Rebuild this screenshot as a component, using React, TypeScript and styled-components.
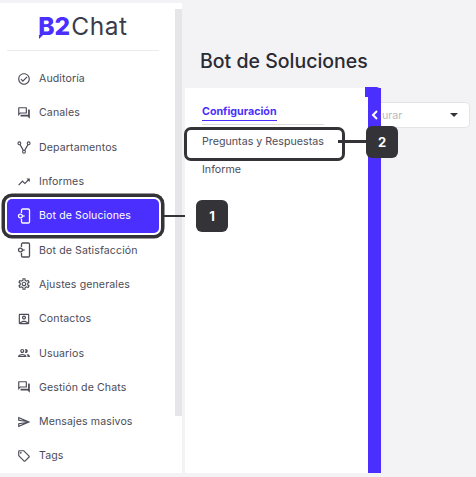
import styled, { createGlobalStyle } from 'styled-components';
import {
  MdOutlineCheckCircle,
  MdOutlineForum,
  MdTrendingUp,
  MdOutlineSettings,
  MdOutlineAccountBox,
  MdOutlinePeople,
  MdOutlineSend,
  MdOutlineLocalOffer,
} from 'react-icons/md';

const purple = '#4b2fff';
const dark = '#333338';
const textColor = '#4c4c58';

const GlobalStyle = createGlobalStyle`
  html, body {
    margin: 0;
    padding: 0;
    background: #f3f3f6;
  }
  * {
    box-sizing: border-box;
  }
`;

const Page = styled.div`
  width: 476px;
  height: 477px;
  padding: 3px 0 4px;
  display: flex;
  overflow: hidden;
  font-family: Inter, 'Liberation Sans', sans-serif;
  color: ${textColor};
`;

const Sidebar = styled.aside`
  width: 182px;
  height: 100%;
  background: #fff;
  display: flex;
  flex-shrink: 0;
`;

const SideColumn = styled.div`
  width: 175px;
  padding: 0 16px 0 7px;
`;

const LogoBox = styled.div`
  height: 48px;
  border-bottom: 1px solid #ececef;
  display: flex;
  justify-content: center;
  padding-top: 7px;
`;

const Logo = styled.div`
  font-size: 24.5px;
  line-height: 32px;
  letter-spacing: 0.6px;
  color: #3b3c4b;
`;

const LogoMark = styled.span`
  position: relative;
  margin-right: 1px;
  font-weight: 800;
  letter-spacing: 0;
  color: ${purple};
  &::after {
    content: '';
    position: absolute;
    left: 1px;
    bottom: 2px;
    border-top: 4px solid ${purple};
    border-right: 4px solid transparent;
  }
`;

const NavList = styled.nav`
  margin-top: 10.5px;
  width: 152px;
`;

const NavRow = styled.div<{ $active?: boolean }>`
  position: relative;
  height: 34.3px;
  padding-left: 10px;
  display: flex;
  align-items: center;
  gap: 8px;
  font-size: 10.6px;
  letter-spacing: 0.1px;
  border-radius: 5px;
  color: ${(p) => (p.$active ? '#fff' : textColor)};
  background: ${(p) => (p.$active ? purple : 'transparent')};
  box-shadow: ${(p) => (p.$active ? `0 0 0 2px #fff, 0 0 0 5.5px ${dark}` : 'none')};
`;

const IconSlot = styled.span`
  width: 14px;
  height: 14px;
  display: flex;
  align-items: center;
  justify-content: center;
  flex-shrink: 0;
  font-size: 16px;
`;

const ScrollTrack = styled.div`
  width: 7px;
  padding-top: 6px;
`;

const ScrollThumb = styled.div`
  height: 407px;
  background: #e6e6e9;
`;

const Main = styled.main`
  flex: 1;
  margin-left: 3px;
  display: flex;
  flex-direction: column;
`;

const Title = styled.h1`
  margin: 0;
  height: 85px;
  padding: 46px 0 0 15px;
  font-size: 19.5px;
  line-height: 24px;
  font-weight: 500;
  color: #2b2b33;
`;

const Content = styled.div`
  flex: 1;
  display: flex;
  align-items: flex-start;
`;

const Panel = styled.section`
  position: relative;
  width: 183px;
  height: 100%;
  padding: 15px 0 0 17px;
  background: #fff;
  font-size: 10.7px;
`;

const ActiveTab = styled.div`
  width: 122px;
  height: 22px;
  border-bottom: 1px solid #dcdce0;
  line-height: 17px;
  font-weight: 700;
  color: ${purple};
  & > span {
    display: inline-block;
    border-bottom: 1px solid ${purple};
  }
`;

const Tab = styled.div<{ $marked?: boolean }>`
  position: relative;
  height: 28px;
  margin-top: ${(p) => (p.$marked ? '2px' : '0')};
  display: flex;
  align-items: center;
  &::before {
    content: ${(p) => (p.$marked ? "''" : 'none')};
    position: absolute;
    left: -18px;
    top: 0;
    width: 155px;
    height: 28px;
    border: 3.5px solid ${dark};
    border-radius: 7px;
  }
`;

const Connector = styled.span<{ $left: number; $width: number }>`
  position: absolute;
  top: 50%;
  left: ${(p) => p.$left}px;
  width: ${(p) => p.$width}px;
  height: 2.5px;
  margin-top: -1px;
  background: ${dark};
`;

const Badge = styled.span<{ $left: number; $lift?: number }>`
  position: absolute;
  z-index: 2;
  top: 50%;
  left: ${(p) => p.$left}px;
  width: 32px;
  height: 32px;
  margin-top: ${(p) => -16 + (p.$lift ?? 0)}px;
  border-radius: 6px;
  background: ${dark};
  color: #fff;
  font-size: 13px;
  font-weight: 700;
  display: flex;
  align-items: center;
  justify-content: center;
`;

const Bar = styled.div`
  position: relative;
  width: 13px;
  height: 100%;
  background: ${purple};
  &::before {
    content: '';
    position: absolute;
    top: -1px;
    right: 0;
    width: 16px;
    height: 10px;
    background: ${purple};
    border-top-right-radius: 5px;
  }
`;

const BarChevron = styled.svg`
  position: absolute;
  top: 22px;
  left: 3px;
`;

const Select = styled.div`
  width: 89px;
  height: 26px;
  margin-top: 14px;
  padding: 0 11px 0 1px;
  background: #fff;
  border: 1px solid #e4e4e8;
  border-left: none;
  border-radius: 0 5px 5px 0;
  display: flex;
  align-items: center;
  justify-content: space-between;
  font-size: 10.7px;
  color: #b9b9c0;
`;

const Caret = styled.span`
  border-top: 4px solid #33333a;
  border-left: 4px solid transparent;
  border-right: 4px solid transparent;
`;

const NodesIcon = () => (
  <svg width="15" height="15" viewBox="0 0 15 15" fill="none" stroke="currentColor" strokeWidth="1.2">
    <circle cx="2.5" cy="3" r="1.5" />
    <circle cx="12.5" cy="3" r="1.5" />
    <circle cx="7.5" cy="12" r="1.5" />
    <path d="M3.3 4.4 6.8 10.6M11.7 4.4 8.2 10.6" />
  </svg>
);

const BotIcon = () => (
  <svg width="14" height="16" viewBox="0 0 14 16" fill="none" stroke="currentColor" strokeWidth="1.3">
    <path d="M4.5 5V2.2C4.5 1.5 5 1 5.7 1h5.6c.7 0 1.2.5 1.2 1.2v11.6c0 .7-.5 1.2-1.2 1.2H5.7c-.7 0-1.2-.5-1.2-1.2V11" />
    <circle cx="3.4" cy="8" r="1.9" />
    <path d="M5.3 8h2.4" />
  </svg>
);

const items = [
  { label: 'Auditoría', icon: <MdOutlineCheckCircle /> },
  { label: 'Canales', icon: <MdOutlineForum /> },
  { label: 'Departamentos', icon: <NodesIcon /> },
  { label: 'Informes', icon: <MdTrendingUp /> },
  { label: 'Bot de Soluciones', icon: <BotIcon />, active: true },
  { label: 'Bot de Satisfacción', icon: <BotIcon /> },
  { label: 'Ajustes generales', icon: <MdOutlineSettings /> },
  { label: 'Contactos', icon: <MdOutlineAccountBox /> },
  { label: 'Usuarios', icon: <MdOutlinePeople /> },
  { label: 'Gestión de Chats', icon: <MdOutlineForum /> },
  { label: 'Mensajes masivos', icon: <MdOutlineSend /> },
  { label: 'Tags', icon: <MdOutlineLocalOffer /> },
];

export default function App() {
  return (
    <Page>
      <GlobalStyle />
      <Sidebar>
        <SideColumn>
          <LogoBox>
            <Logo>
              <LogoMark>B2</LogoMark>Chat
            </Logo>
          </LogoBox>
          <NavList>
            {items.map((item) => (
              <NavRow key={item.label} $active={item.active}>
                <IconSlot>{item.icon}</IconSlot>
                {item.label}
                {item.active && (
                  <>
                    <Connector $left={157} $width={32} />
                    <Badge $left={189}>1</Badge>
                  </>
                )}
              </NavRow>
            ))}
          </NavList>
        </SideColumn>
        <ScrollTrack>
          <ScrollThumb />
        </ScrollTrack>
      </Sidebar>
      <Main>
        <Title>Bot de Soluciones</Title>
        <Content>
          <Panel>
            <ActiveTab>
              <span>Configuración</span>
            </ActiveTab>
            <Tab $marked>
              Preguntas y Respuestas
              <Connector $left={136} $width={30} />
              <Badge $left={164} $lift={1}>2</Badge>
            </Tab>
            <Tab>Informe</Tab>
          </Panel>
          <Bar>
            <BarChevron width="8" height="10" viewBox="0 0 8 10" fill="none" stroke="#fff" strokeWidth="2">
              <path d="M6 1 2 5l4 4" />
            </BarChevron>
          </Bar>
          <Select>
            urar
            <Caret />
          </Select>
        </Content>
      </Main>
    </Page>
  );
}
